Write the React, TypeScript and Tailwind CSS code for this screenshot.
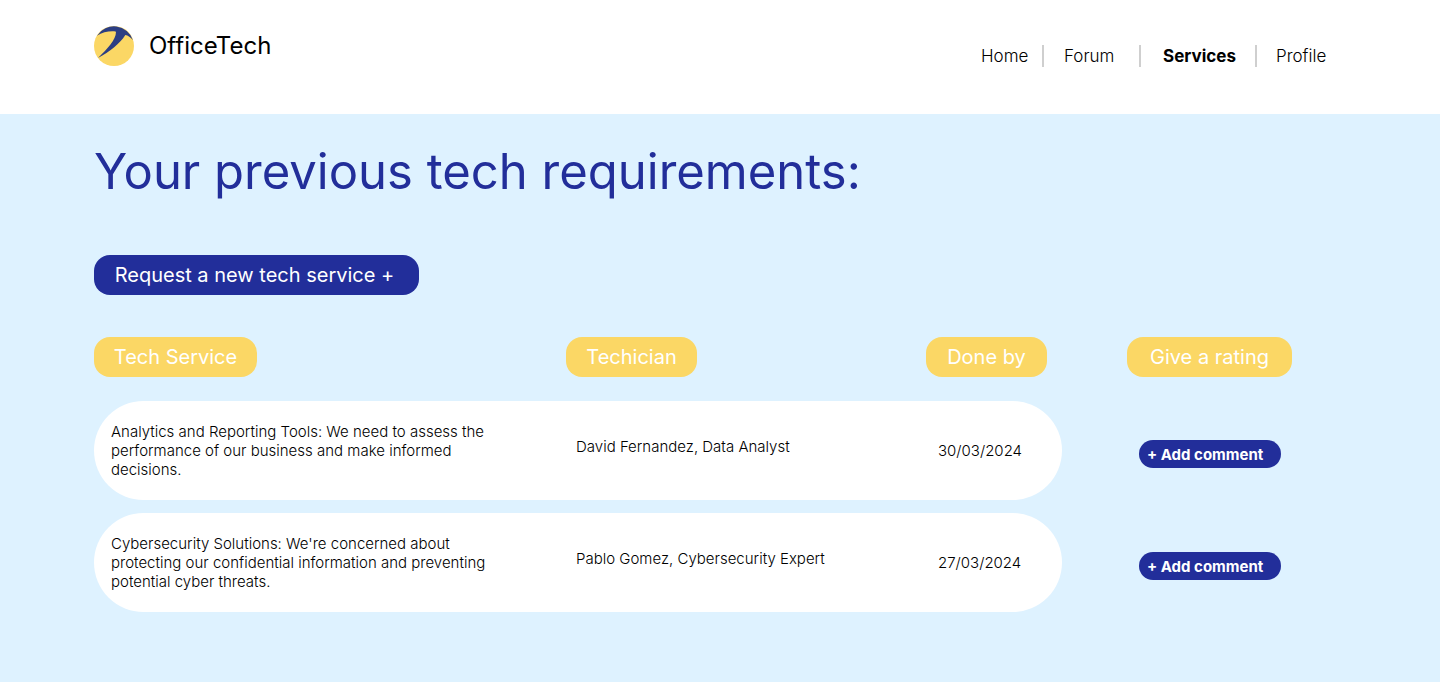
const navItems = [
  { label: "Home", box: "w-[63px] border-r-2", active: false },
  { label: "Forum", box: "w-[97px] border-r-2 pl-5", active: false },
  { label: "Services", box: "w-[116px] border-r-2 pl-[22px]", active: true },
  { label: "Profile", box: "w-[70px] pl-[19px]", active: false },
];

const services = [
  {
    title:
      "Analytics and Reporting Tools: We need to assess the performance of our business and make informed decisions.",
    technician: "David Fernandez, Data Analyst",
    date: "30/03/2024",
  },
  {
    title:
      "Cybersecurity Solutions: We're concerned about protecting our confidential information and preventing potential cyber threats.",
    technician: "Pablo Gomez, Cybersecurity Expert",
    date: "27/03/2024",
  },
];

const pill =
  "inline-flex h-10 items-center justify-center whitespace-nowrap rounded-2xl bg-[#fbd765] text-xl leading-6 font-normal text-white";

function Logo() {
  return (
    <svg viewBox="0 0 120 120" className="size-10" aria-hidden="true">
      <circle cx="60" cy="60" r="60" fill="#fbd765" />
      <path
        d="M9 29 A60 60 0 0 1 117 43 C110 34 102 28 94 27 C76 55 48 76 12 96 C40 68 66 42 66 17 C50 14 26 18 9 29 Z"
        fill="#2c3e83"
      />
    </svg>
  );
}

export default function App() {
  return (
    <div className="flex min-h-screen flex-col bg-[#def2ff] font-[Inter,sans-serif] text-black">
      <header className="flex items-start justify-between bg-white pr-[113px] pb-[47px] pl-[94px] pt-[26px]">
        <a href="#" className="flex items-center gap-[15px] text-2xl leading-10">
          <Logo />
          OfficeTech
        </a>
        <nav className="pt-[19px]">
          <ul className="flex text-[17px] leading-[22px]">
            {navItems.map((item) => (
              <li key={item.label} className={`h-[22px] border-[#cfcfcf] ${item.box}`}>
                <a href="#" className={item.active ? "font-bold" : "font-light"}>
                  {item.label}
                </a>
              </li>
            ))}
          </ul>
        </nav>
      </header>

      <main className="px-[94px] pt-7 pb-12">
        <h1 className="text-[49px] leading-[60px] text-[#222e9a]">Your previous tech requirements:</h1>
        <button
          type="button"
          className="mt-[53px] h-10 w-[325px] whitespace-nowrap rounded-2xl bg-[#222e9a] pr-1 text-xl text-white"
        >
          Request a new tech service +
        </button>

        <table className="mt-[29px] w-full table-fixed border-separate border-spacing-x-0 border-spacing-y-[13px] text-left">
          <colgroup>
            <col />
            <col className="w-[360px]" />
            <col className="w-[136px]" />
            <col className="w-[284px]" />
          </colgroup>
          <thead>
            <tr className="align-top">
              <th className="h-[51px] p-0">
                <span className={`${pill} w-[163px]`}>Tech Service</span>
              </th>
              <th className="p-0">
                <span className={`${pill} w-[131px]`}>Techician</span>
              </th>
              <th className="p-0">
                <span className={`${pill} w-[121px]`}>Done by</span>
              </th>
              <th className="p-0 pl-[65px]">
                <span className={`${pill} w-[165px]`}>Give a rating</span>
              </th>
            </tr>
          </thead>
          <tbody className="text-[15px] leading-[19px] font-light">
            {services.map((service) => (
              <tr key={service.date}>
                <td className="h-[99px] rounded-l-[50px] bg-white py-0 pr-0 pl-[17px]">
                  <p className="max-w-[400px]">{service.title}</p>
                </td>
                <td className="bg-white pt-0 pr-0 pb-2 pl-[10px]">{service.technician}</td>
                <td className="rounded-r-[50px] bg-white py-0 pr-0 pl-3">{service.date}</td>
                <td className="pt-1.5 pr-0 pb-0 pl-[77px]">
                  <button
                    type="button"
                    className="h-7 w-[142px] whitespace-nowrap rounded-full bg-[#222e9a] pt-0.5 pl-2 text-left text-[15px] font-bold text-white"
                  >
                    + Add comment
                  </button>
                </td>
              </tr>
            ))}
          </tbody>
        </table>
      </main>
    </div>
  );
}
